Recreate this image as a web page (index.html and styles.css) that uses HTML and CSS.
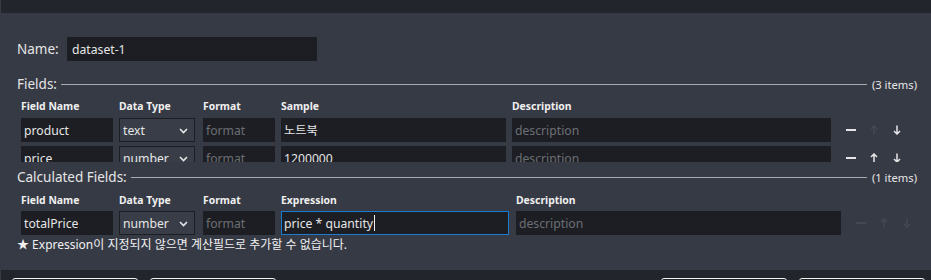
FILE: index.html
```html
<!DOCTYPE html>
<html lang="ko">
<head>
<meta charset="utf-8">
<title>Dataset</title>
<link rel="stylesheet" href="styles.css">
</head>
<body>
<div class="dialog">
  <div class="topbar"></div>
  <div class="content">
    <div class="name-row">
      <label class="name-label" for="ds-name">Name:</label>
      <input id="ds-name" class="inp name-inp" value="dataset-1">
    </div>

    <div class="legend">
      <span class="legend-title">Fields:</span>
      <span class="legend-line"></span>
      <span class="legend-count">(3 items)</span>
    </div>

    <div class="fields-scroll">
      <div class="grid fields-grid head">
        <div>Field Name</div><div>Data Type</div><div>Format</div><div>Sample</div><div>Description</div><div></div>
      </div>
      <div class="grid fields-grid row">
        <input class="inp" value="product">
        <div class="sel"><span>text</span><svg class="chev" width="9" height="6" viewBox="0 0 9 6"><path d="M1 1l3.5 3.5L8 1" fill="none" stroke="#e6e6e6" stroke-width="1.6"/></svg></div>
        <input class="inp" placeholder="format">
        <input class="inp" value="노트북">
        <input class="inp" placeholder="description">
        <div class="acts">
          <span class="act"><svg width="10" height="10" viewBox="0 0 10 10"><rect x="0" y="4" width="10" height="2" fill="#e6e6e6"/></svg></span>
          <span class="act off"><svg width="8" height="10" viewBox="0 0 8 10"><path d="M4 9.5V1M1 4l3-3 3 3" fill="none" stroke="currentColor" stroke-width="1.5"/></svg></span>
          <span class="act"><svg width="8" height="10" viewBox="0 0 8 10"><path d="M4 0.5V9M1 6l3 3 3-3" fill="none" stroke="currentColor" stroke-width="1.5"/></svg></span>
        </div>
      </div>
      <div class="grid fields-grid row">
        <input class="inp" value="price">
        <div class="sel"><span>number</span><svg class="chev" width="9" height="6" viewBox="0 0 9 6"><path d="M1 1l3.5 3.5L8 1" fill="none" stroke="#e6e6e6" stroke-width="1.6"/></svg></div>
        <input class="inp" placeholder="format">
        <input class="inp" value="1200000">
        <input class="inp" placeholder="description">
        <div class="acts">
          <span class="act"><svg width="10" height="10" viewBox="0 0 10 10"><rect x="0" y="4" width="10" height="2" fill="#e6e6e6"/></svg></span>
          <span class="act"><svg width="8" height="10" viewBox="0 0 8 10"><path d="M4 9.5V1M1 4l3-3 3 3" fill="none" stroke="currentColor" stroke-width="1.5"/></svg></span>
          <span class="act"><svg width="8" height="10" viewBox="0 0 8 10"><path d="M4 0.5V9M1 6l3 3 3-3" fill="none" stroke="currentColor" stroke-width="1.5"/></svg></span>
        </div>
      </div>
    </div>

    <div class="legend legend-calc">
      <span class="legend-title">Calculated Fields:</span>
      <span class="legend-line"></span>
      <span class="legend-count">(1 items)</span>
    </div>

    <div class="grid calc-grid head head-calc">
      <div>Field Name</div><div>Data Type</div><div>Format</div><div>Expression</div><div>Description</div><div></div>
    </div>
    <div class="grid calc-grid row row-calc">
      <input class="inp" value="totalPrice">
      <div class="sel"><span>number</span><svg class="chev" width="9" height="6" viewBox="0 0 9 6"><path d="M1 1l3.5 3.5L8 1" fill="none" stroke="#e6e6e6" stroke-width="1.6"/></svg></div>
      <input class="inp" placeholder="format">
      <div class="inp focus expr">price * quantity<span class="caret"></span></div>
      <input class="inp" placeholder="description">
      <div class="acts">
        <span class="act off"><svg width="10" height="10" viewBox="0 0 10 10"><rect x="0" y="4" width="10" height="2" fill="currentColor"/></svg></span>
        <span class="act off"><svg width="8" height="10" viewBox="0 0 8 10"><path d="M4 9.5V1M1 4l3-3 3 3" fill="none" stroke="currentColor" stroke-width="1.5"/></svg></span>
        <span class="act off"><svg width="8" height="10" viewBox="0 0 8 10"><path d="M4 0.5V9M1 6l3 3 3-3" fill="none" stroke="currentColor" stroke-width="1.5"/></svg></span>
      </div>
    </div>

    <div class="note">★ Expression이 지정되지 않으면 계산필드로 추가할 수 없습니다.</div>
  </div>
  <div class="footer">
    <div class="btn-group">
      <button class="btn">Add Field</button>
      <button class="btn">Add Calculated</button>
    </div>
    <div class="btn-group">
      <button class="btn">OK</button>
      <button class="btn">Cancel</button>
    </div>
  </div>
</div>
</body>
</html>
```

FILE: styles.css
```css
* { box-sizing: border-box; }
html, body { margin: 0; padding: 0; }
body {
  background: #363a45;
  font-family: "Noto Sans", "Noto Sans CJK KR", sans-serif;
  color: #e6e6e6;
  width: 931px;
  height: 280px;
  overflow: hidden;
}
.dialog {
  display: flex;
  flex-direction: column;
  height: 280px;
}
.topbar {
  height: 13px;
  margin-left: 1px;
  background: #22252c;
  flex: none;
}
.content {
  flex: 1;
  padding: 24px 14px 0 17px;
  display: flex;
  flex-direction: column;
  min-height: 0;
}
.name-row {
  display: flex;
  align-items: center;
  height: 24px;
}
.name-label {
  font-size: 13.5px;
  width: 50px;
}
.inp {
  background: #1d1e23;
  border: 1px solid #1d1e23;
  color: #e6e6e6;
  font-family: "Noto Sans", "Noto Sans CJK KR", sans-serif;
  font-size: 12.2px;
  height: 24px;
  padding: 0 2px;
  outline: none;
  width: 100%;
  margin: 0;
  border-radius: 0;
}
.inp::placeholder { color: #6c6e74; }
.name-inp {
  width: 250px;
  padding: 0 4px;
}
.legend {
  display: flex;
  align-items: center;
  height: 18px;
  margin-top: 14px;
  flex: none;
}
.legend-calc { margin-top: 6px; }
.legend-title { font-size: 13.5px; color: #e6e6e6; }
.legend-line {
  flex: 1;
  height: 1px;
  background: #a8aab0;
  margin: 0 5px 0 4px;
}
.legend-count { font-size: 11.2px; color: #e6e6e6; }
.fields-scroll {
  height: 69px;
  flex: none;
  overflow: hidden;
  padding-right: 10px;
}
.grid {
  display: grid;
  column-gap: 6px;
  padding-left: 4px;
  align-items: center;
}
.fields-grid { grid-template-columns: 92px 78px 72px 225px 319px auto; }
.calc-grid { grid-template-columns: 92px 78px 72px 229px 325px auto; }
.head {
  font-size: 10.4px;
  font-weight: 700;
  color: #f0f0f0;
  line-height: 16px;
  padding-top: 5px;
}
.head-calc { padding-top: 6px; }
.row { margin-top: 4px; }
.row-calc { margin-top: 3px; }
.sel {
  position: relative;
  width: 76px;
  height: 24px;
  border: 1px solid #1d1e23;
  background: #393d48;
  font-size: 12.2px;
  display: flex;
  align-items: center;
  padding-left: 3px;
}
.chev {
  position: absolute;
  right: 6px;
  top: 9px;
}
.expr {
  width: 228px;
  border-color: #1a7bd1;
  display: flex;
  align-items: center;
  white-space: pre;
}
.caret {
  display: inline-block;
  width: 1px;
  height: 16px;
  background: #f0f0f0;
  margin-left: 1px;
}
.acts {
  display: flex;
  padding-left: 2px;
}
.act {
  width: 23px;
  height: 24px;
  display: flex;
  align-items: center;
  justify-content: center;
  color: #e6e6e6;
}
.act.off { color: #444854; }
.note {
  margin-top: 3px;
  font-size: 12px;
  line-height: 14px;
  color: #f0f0f0;
}
.footer {
  flex: none;
  height: 10px;
  margin-left: 1px;
  background: #22252c;
  display: flex;
  justify-content: space-between;
  padding: 8px 6px 0 11px;
  overflow: hidden;
}
.btn-group {
  display: flex;
  gap: 12px;
}
.btn {
  width: 126px;
  height: 36px;
  background: #22252c;
  border: 1px solid #f2f2f2;
  border-radius: 3px;
  color: #f0f0f0;
  font-family: "Noto Sans", sans-serif;
  font-size: 12px;
}
```
